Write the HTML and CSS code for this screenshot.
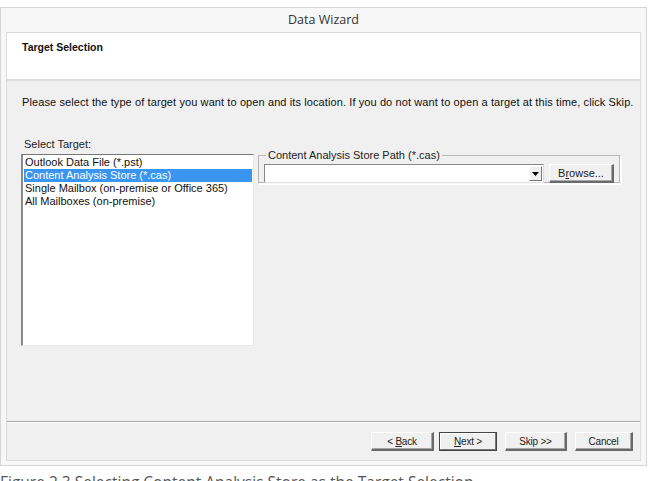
FILE: index.html
```html
<!DOCTYPE html>
<html>
<head>
<meta charset="utf-8">
<link rel="stylesheet" href="styles.css">
</head>
<body>
<div class="window">
  <div class="titlebar">Data Wizard</div>
  <div class="content">
    <div class="header"><span class="header-title">Target Selection</span></div>
    <div class="body">
      <p class="instruction">Please select the type of target you want to open and its location. If you do not want to open a target at this time, click Skip.</p>
      <div class="main">
        <div class="target-col">
          <div class="select-label">Select Target:</div>
          <ul class="listbox">
            <li>Outlook Data File (*.pst)</li>
            <li class="selected">Content Analysis Store (*.cas)</li>
            <li>Single Mailbox (on-premise or Office 365)</li>
            <li>All Mailboxes (on-premise)</li>
          </ul>
        </div>
        <fieldset class="group">
          <legend>Content Analysis Store Path (*.cas)</legend>
          <div class="path-row">
            <div class="combo">
              <div class="combo-field"></div>
              <div class="combo-btn"><svg width="7" height="4" viewBox="0 0 7 4"><path d="M0 0H7L3.5 4Z" fill="#000"/></svg></div>
            </div>
            <button class="btn browse">B<u>r</u>owse...</button>
          </div>
        </fieldset>
      </div>
    </div>
    <div class="footer">
      <button class="btn wbtn back">&lt; <u>B</u>ack</button>
      <button class="btn wbtn next default"><u>N</u>ext &gt;</button>
      <button class="btn wbtn skip">Skip &gt;&gt;</button>
      <button class="btn wbtn cancel">Cancel</button>
    </div>
  </div>
</div>
<div class="caption">Figure 2.3 Selecting Content Analysis Store as the Target Selection</div>
</body>
</html>
```
FILE: styles.css
```css
* { box-sizing: border-box; }
html, body { margin: 0; padding: 0; background: #fff; }
body { font-family: "Liberation Sans", Arial, sans-serif; color: #000; overflow: hidden; }

.window {
  margin-top: 7px;
  width: 647px;
  height: 459px;
  border: 1px solid #d6d6d6;
  background: #f7f7f7;
  padding: 0 5px 4px 5px;
  display: flex;
  flex-direction: column;
}
.titlebar {
  height: 24px;
  line-height: 24px;
  text-align: center;
  font-family: "Open Sans", "Noto Sans", sans-serif;
  font-size: 12.5px;
  color: #333;
}
.content {
  flex: 1;
  border: 1px solid #dcdcdc;
  display: flex;
  flex-direction: column;
  background: #f0f0f0;
}
.header {
  height: 48px;
  background: #fff;
  border-bottom: 2px solid #dedede;
  padding: 4px 0 0 15px;
}
.header-title {
  font-family: "Liberation Sans", Arial, sans-serif;
  font-weight: bold;
  font-size: 10.5px;
  color: #111;
}
.body {
  flex: 1;
  padding: 15px 0 0 15px;
}
.instruction {
  margin: 0;
  font-size: 11px;
  line-height: 13px;
  letter-spacing: 0.1px;
  color: #111;
  white-space: nowrap;
}
.main {
  display: flex;
  margin-top: 29px;
  align-items: flex-start;
}
.target-col { width: 233px; margin-left: -1px; }
.select-label {
  font-size: 11px;
  line-height: 13px;
  padding-left: 3px;
  color: #222;
}
.listbox {
  list-style: none;
  margin: 3px 0 0 0;
  padding: 1px 1px;
  height: 192px;
  background: #fff;
  border-top: 1px solid #777;
  border-left: 2px solid #8a8a8a;
  border-right: 1px solid #e8e8e8;
  border-bottom: 1px solid #e8e8e8;
}
.listbox li {
  font-size: 11px;
  line-height: 13px;
  height: 13px;
  padding-left: 1px;
  color: #111;
  white-space: nowrap;
}
.listbox li.selected { background: #3a95f0; color: #fff; }

.group {
  margin: 12px 0 0 4px;
  width: 363px;
  padding: 0 4px 3px 5px;
  border: 1px solid #b8b8b8;
  border-right-color: #fafafa;
  border-bottom-color: #fafafa;
  box-shadow: inset -1px -1px 0 #b8b8b8, 1px 1px 0 #fff;
  height: 34px;
}
.group legend {
  font-size: 11px;
  line-height: 11px;
  padding: 0 2px;
  margin-left: 2px;
  color: #222;
}
.path-row { display: flex; align-items: flex-start; gap: 5px; margin-top: 3px; }
.combo {
  width: 280px;
  height: 19px;
  display: flex;
  background: #fff;
  border-top: 1px solid #888;
  border-left: 1px solid #888;
  border-right: 1px solid #e0e0e0;
  border-bottom: 1px solid #e0e0e0;
}
.combo-field { flex: 1; }
.combo-btn {
  width: 13px;
  margin: 1px;
  background: #f0f0f0;
  border-top: 1px solid #fff;
  border-left: 1px solid #fff;
  border-right: 1px solid #777;
  border-bottom: 1px solid #777;
  display: flex;
  align-items: center;
  justify-content: center;
}
.btn {
  font-family: "Liberation Sans", Arial, sans-serif;
  font-size: 11px;
  color: #222;
  background: #f0f0f0;
  border-top: 1px solid #fff;
  border-left: 1px solid #fff;
  border-right: 2px solid #6a6a6a;
  border-bottom: 2px solid #6a6a6a;
  box-shadow: inset -1px -1px 0 #a8a8a8;
  padding: 0;
  height: 19px;
  line-height: 15px;
}
.browse { width: 65px; }

.footer {
  height: 39px;
  border-top: 1px solid #a8a8a8;
  box-shadow: inset 0 1px 0 #fff;
  display: flex;
  justify-content: flex-end;
  align-items: flex-start;
  padding: 10px 7px 0 0;
}
.wbtn { font-size: 10px; letter-spacing: -0.2px; }
.back { width: 63px; margin-right: 5px; }
.next { width: 58px; margin-right: 8px; }
.skip { width: 62px; margin-right: 8px; }
.cancel { width: 58px; }
.default {
  border: 1px solid #444;
  box-shadow: inset -1px -1px 0 #777, inset 1px 1px 0 #fff;
}

.caption {
  margin-top: 5px;
  padding-left: 0;
  font-family: "Open Sans", "Noto Sans", sans-serif;
  font-size: 15.5px;
  color: #555;
  white-space: nowrap;
}
```
